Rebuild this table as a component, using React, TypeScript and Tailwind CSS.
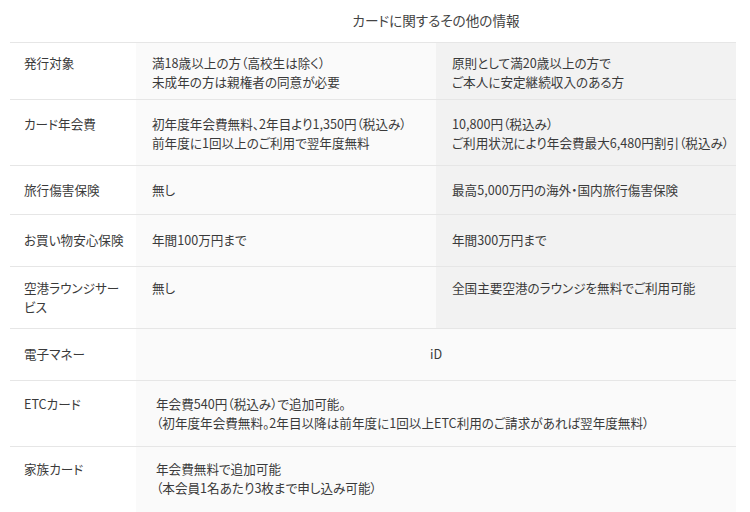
import React from "react";

const font = { fontFamily: '"Noto Sans CJK JP", "Noto Sans", sans-serif' };

function Lines({ lines }: { lines: string[] }) {
  return (
    <>
      {lines.map((l, i) => (
        <div key={i} className="whitespace-nowrap">{l}</div>
      ))}
    </>
  );
}

export default function App() {
  return (
    <div className="w-[750px] h-[512px] overflow-hidden bg-white text-[#3a3a3a] [font-feature-settings:'palt']" style={font}>
      <div className="ml-[10px] w-[726px]">
        {/* header */}
        <div className="grid grid-cols-[126px_600px] h-[42px]">
          <div />
          <div className="flex items-center justify-center text-[13.6px] text-[#444] pb-[2px]">カードに関するその他の情報</div>
        </div>

        {/* row 1 */}
        <div className="grid grid-cols-[126px_300px_300px] h-[57px] border-t border-[#e6e6e6] text-[12.6px] leading-[18.5px]">
          <div className="pl-[14px] pt-[11px]">発行対象</div>
          <div className="bg-[#fafafa] pl-[16px] pt-[11px]"><Lines lines={["満18歳以上の方（高校生は除く）", "未成年の方は親権者の同意が必要"]} /></div>
          <div className="bg-[#f2f2f2] pl-[16px] pt-[11px]"><Lines lines={["原則として満20歳以上の方で", "ご本人に安定継続収入のある方"]} /></div>
        </div>

        {/* row 2 */}
        <div className="grid grid-cols-[126px_300px_300px] h-[66px] border-t border-[#e6e6e6] text-[12.6px] leading-[18.5px]">
          <div className="pl-[14px] pt-[15px]">カード年会費</div>
          <div className="bg-[#fafafa] pl-[16px] pt-[15px]"><Lines lines={["初年度年会費無料、2年目より1,350円（税込み）", "前年度に1回以上のご利用で翌年度無料"]} /></div>
          <div className="bg-[#f2f2f2] pl-[16px] pt-[15px]"><Lines lines={["10,800円（税込み）", "ご利用状況により年会費最大6,480円割引（税込み）"]} /></div>
        </div>

        {/* row 3 */}
        <div className="grid grid-cols-[126px_300px_300px] h-[49px] border-t border-[#e6e6e6] text-[12.6px] leading-[18.5px]">
          <div className="pl-[14px] pt-[15px]">旅行傷害保険</div>
          <div className="bg-[#fafafa] pl-[16px] pt-[15px]">無し</div>
          <div className="bg-[#f2f2f2] pl-[16px] pt-[15px]">最高5,000万円の海外・国内旅行傷害保険</div>
        </div>

        {/* row 4 */}
        <div className="grid grid-cols-[126px_300px_300px] h-[52px] border-t border-[#e6e6e6] text-[12.6px] leading-[18.5px]">
          <div className="pl-[14px] pt-[16px]">お買い物安心保険</div>
          <div className="bg-[#fafafa] pl-[16px] pt-[16px]">年間100万円まで</div>
          <div className="bg-[#f2f2f2] pl-[16px] pt-[16px]">年間300万円まで</div>
        </div>

        {/* row 5 */}
        <div className="grid grid-cols-[126px_300px_300px] h-[62px] border-t border-[#e6e6e6] text-[12.6px] leading-[18.5px]">
          <div className="pl-[14px] pt-[12px] pr-[14px]">空港ラウンジサービス</div>
          <div className="bg-[#fafafa] pl-[16px] pt-[12px]">無し</div>
          <div className="bg-[#f2f2f2] pl-[16px] pt-[12px]">全国主要空港のラウンジを無料でご利用可能</div>
        </div>

        {/* row 6 */}
        <div className="grid grid-cols-[126px_600px] h-[52px] border-t border-[#e6e6e6] text-[12.6px] leading-[18.5px]">
          <div className="pl-[14px] pt-[16px]">電子マネー</div>
          <div className="bg-[#fafafa] pt-[16px] text-center">iD</div>
        </div>

        {/* row 7 */}
        <div className="grid grid-cols-[126px_600px] h-[66px] border-t border-[#e6e6e6] text-[12.6px] leading-[18.5px]">
          <div className="pl-[14px] pt-[14px]">ETCカード</div>
          <div className="bg-[#fafafa] pl-[20px] pt-[14px]"><Lines lines={["年会費540円（税込み）で追加可能。", "（初年度年会費無料。2年目以降は前年度に1回以上ETC利用のご請求があれば翌年度無料）"]} /></div>
        </div>

        {/* row 8 */}
        <div className="grid grid-cols-[126px_600px] h-[70px] border-t border-[#e6e6e6] text-[12.6px] leading-[18.5px]">
          <div className="pl-[14px] pt-[13px]">家族カード</div>
          <div className="bg-[#fafafa] pl-[20px] pt-[13px]"><Lines lines={["年会費無料で追加可能", "（本会員1名あたり3枚まで申し込み可能）"]} /></div>
        </div>
      </div>
    </div>
  );
}
